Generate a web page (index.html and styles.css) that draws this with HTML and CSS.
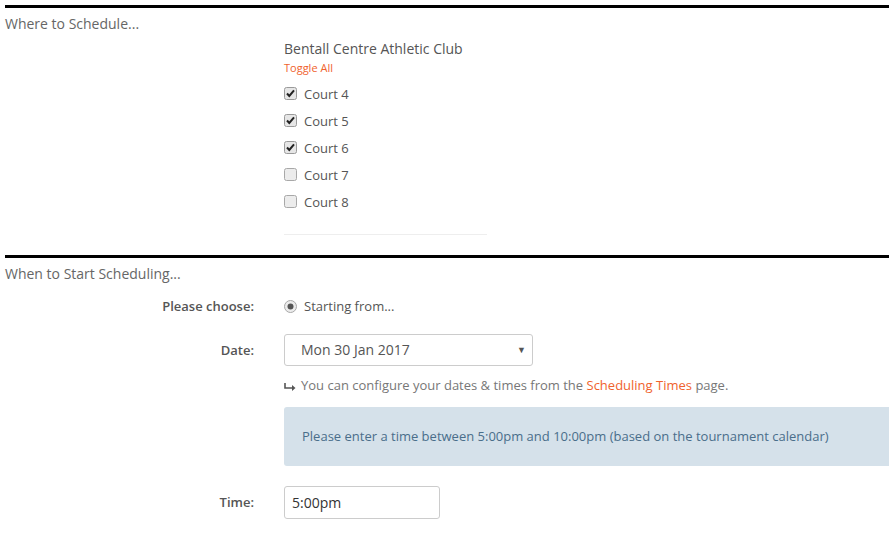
FILE: index.html
```html
<!DOCTYPE html>
<html>
<head>
<meta charset="utf-8">
<link rel="stylesheet" href="styles.css">
</head>
<body>

<div class="section">
  <div class="section-title">Where to Schedule...</div>
  <div class="venue">
    <div class="venue-name">Bentall Centre Athletic Club</div>
    <a class="toggle" href="#">Toggle All</a>
    <ul class="courts">
      <li><span class="box"><svg width="13" height="13" viewBox="0 0 13 13"><rect x="0.5" y="0.5" width="12" height="12" rx="2" fill="#e6e6e6" stroke="#9a9a9a"/><path d="M3 6.5 L5.3 9 L10 3.3" fill="none" stroke="#222" stroke-width="2"/></svg></span>Court 4</li>
      <li><span class="box"><svg width="13" height="13" viewBox="0 0 13 13"><rect x="0.5" y="0.5" width="12" height="12" rx="2" fill="#e6e6e6" stroke="#9a9a9a"/><path d="M3 6.5 L5.3 9 L10 3.3" fill="none" stroke="#222" stroke-width="2"/></svg></span>Court 5</li>
      <li><span class="box"><svg width="13" height="13" viewBox="0 0 13 13"><rect x="0.5" y="0.5" width="12" height="12" rx="2" fill="#e6e6e6" stroke="#9a9a9a"/><path d="M3 6.5 L5.3 9 L10 3.3" fill="none" stroke="#222" stroke-width="2"/></svg></span>Court 6</li>
      <li><span class="box"><svg width="13" height="13" viewBox="0 0 13 13"><rect x="0.5" y="0.5" width="12" height="12" rx="2" fill="#ececec" stroke="#a8a8a8"/></svg></span>Court 7</li>
      <li><span class="box"><svg width="13" height="13" viewBox="0 0 13 13"><rect x="0.5" y="0.5" width="12" height="12" rx="2" fill="#ececec" stroke="#a8a8a8"/></svg></span>Court 8</li>
    </ul>
    <div class="rule"></div>
  </div>
</div>

<div class="section second">
  <div class="section-title">When to Start Scheduling...</div>

  <div class="row choose">
    <div class="label">Please choose:</div>
    <div class="control radio-line">
      <span class="box"><svg width="13" height="13" viewBox="0 0 13 13"><circle cx="6.5" cy="6.5" r="6" fill="#ececec" stroke="#a8a8a8"/><circle cx="6.5" cy="6.5" r="3" fill="#555"/></svg></span>Starting from...
    </div>
  </div>

  <div class="row date">
    <div class="label">Date:</div>
    <div class="control">
      <div class="select">Mon 30 Jan 2017<span class="caret">▼</span></div>
      <div class="help"><svg class="arrow" width="12" height="9" viewBox="0 0 12 9"><path d="M1 1 V6 H9" fill="none" stroke="#555" stroke-width="1.6"/><path d="M8 3 L11.5 6 L8 9 Z" fill="#555"/></svg>You can configure your dates &amp; times from the <a href="#">Scheduling Times</a> page.</div>
      <div class="alert">Please enter a time between 5:00pm and 10:00pm (based on the tournament calendar)</div>
    </div>
  </div>

  <div class="row time">
    <div class="label">Time:</div>
    <div class="control">
      <div class="input">5:00pm</div>
    </div>
  </div>
</div>

</body>
</html>
```

FILE: styles.css
```css
body {
  margin: 0;
  padding: 5px 0 0 5px;
  font-family: "Open Sans", "Liberation Sans", sans-serif;
  font-size: 13px;
  color: #555;
  overflow: hidden;
}

a { color: #f0622d; text-decoration: none; }

.section { border-top: 3px solid #000; }
.second { margin-top: 20px; }

.section-title {
  font-size: 14px;
  color: #666;
  line-height: 20px;
  padding-top: 6px;
}

.venue { margin-left: 279px; padding-top: 5px; }

.venue-name { font-size: 14px; line-height: 20px; color: #555; }

.toggle { display: block; font-size: 11px; line-height: 14px; margin-top: 2px; }

.courts { list-style: none; margin: 5px 0 0 0; padding: 0; }
.courts li {
  display: flex;
  align-items: center;
  height: 27px;
  font-size: 13px;
  color: #555;
}

.box { display: inline-flex; width: 13px; height: 13px; margin-right: 7px; }

.rule { width: 203px; border-top: 1px solid #eee; margin-top: 19px; }

.row { display: flex; }
.label {
  width: 249px;
  text-align: right;
  font-weight: 600;
  color: #555;
  padding-right: 30px;
  flex-shrink: 0;
}
.control { flex: 1; }

.choose { margin-top: 13px; line-height: 18px; }
.radio-line { display: flex; align-items: center; }

.date { margin-top: 19px; }
.date .label { line-height: 32px; }

.select {
  width: 249px;
  height: 32px;
  box-sizing: border-box;
  border: 1px solid #ccc;
  border-radius: 3px;
  padding: 0 0 0 16px;
  line-height: 30px;
  font-size: 14px;
  color: #555;
  position: relative;
}
.caret {
  position: absolute;
  right: 6px;
  top: 0;
  font-size: 9px;
  color: #555;
}

.help { margin-top: 10px; line-height: 18px; color: #777; }
.arrow { margin: 0 5px 0 0; vertical-align: -1px; }

.alert {
  margin-top: 13px;
  background: #d5e1ea;
  color: #4a6e8a;
  border-radius: 3px 0 0 3px;
  height: 59px;
  box-sizing: border-box;
  padding: 20px 0 0 18px;
  line-height: 18px;
}

.time { margin-top: 20px; }
.time .label { line-height: 33px; }

.input {
  width: 156px;
  height: 33px;
  box-sizing: border-box;
  border: 1px solid #ccc;
  border-radius: 3px;
  padding-left: 7px;
  line-height: 31px;
  font-size: 14px;
  color: #333;
}
```
